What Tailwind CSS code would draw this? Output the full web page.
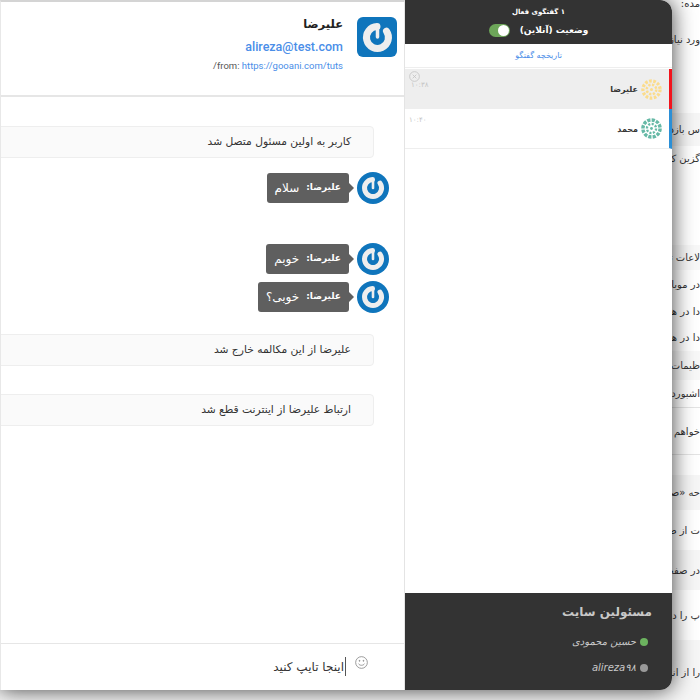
<!DOCTYPE html>
<html lang="fa" dir="rtl">
<head>
    <meta charset="UTF-8">
    <meta name="viewport" content="width=device-width, initial-scale=1.0">
    <title>Live chat</title>
    <script src="https://cdn.jsdelivr.net/npm/@tailwindcss/browser@4"></script>
</head>
<body class="m-0 bg-white font-['DejaVu_Sans',sans-serif]">
    <div class="relative w-[700px] h-[700px] overflow-hidden bg-white">
        <!-- Page behind the chat window -->
        <div class="flex flex-col text-[10px] text-[#333] whitespace-nowrap">
            <div class="h-[24px] leading-[8px]">مده:</div>
            <div class="h-[89px] pt-[8px]">ورد نیاز</div>
            <div class="h-[33px] flex items-center bg-[#f6f6f6]">س بازدید</div>
            <div class="h-[99px] pt-[5px]">گزین کنید</div>
            <div class="h-[25px] flex items-center bg-[#f8f8f8]">لاعات تماس</div>
            <div class="h-[28px] flex items-center">در موبایل</div>
            <div class="h-[26px] flex items-center">دا در هنگام</div>
            <div class="h-[27px] flex items-center">دا در هنگام</div>
            <div class="h-[29px] flex items-center bg-[#f8f8f8]">ظیمات کلی</div>
            <div class="h-[27px] flex items-center">اشبورد شما</div>
            <div class="h-[48px] flex items-center border-y border-[#e4e4e4]">خواهم آمد</div>
            <div class="h-[20px]"></div>
            <div class="h-[35px] flex items-center bg-[#f6f6f6]">حه «صفحه</div>
            <div class="h-[40px] flex items-center">ت از صفحه</div>
            <div class="h-[40px] flex items-center bg-[#f6f6f6]">در صفحه</div>
            <div class="h-[50px] flex items-center">پ را در</div>
            <div class="h-[65px] flex items-center bg-[#f6f6f6]">را از انواع</div>
        </div>

        <!-- Chat window -->
        <div dir="ltr" class="absolute left-0 top-0 w-[672px] h-[690px] flex rounded-r-[12px] shadow-[0_0_22px_rgba(0,0,0,0.75)]">
            <section dir="rtl" class="w-[405px] h-full flex flex-col bg-white border-t-2 border-[#d4d4d4] border-l border-l-[#e8e8e8] border-r border-r-[#e4e4e4] overflow-hidden">
                <header class="h-[95px] shrink-0 flex items-start gap-[14px] pr-[7px] pt-[15px] border-b-2 border-[#e6e6e6]">
                    <svg class="w-[40px] h-[40px] shrink-0" viewBox="0 0 40 40">
                        <rect width="40" height="40" rx="6" fill="#0f75bc"/>
                        <path d="M29.5 14.2A11 11 0 1 1 20 9.5" fill="none" stroke="#eeeeee" stroke-width="7" stroke-linecap="round"/>
                        <path d="M20.5 10V20" stroke="#eeeeee" stroke-width="3.5" stroke-linecap="round"/>
                    </svg>
                    <div class="-mt-[2px] flex flex-col items-start">
                        <h2 class="text-[11.5px] leading-[18px] font-bold text-[#222] m-0">علیرضا</h2>
                        <a class="mt-[6px] text-[12.5px] leading-[16px] font-medium font-['Roboto',sans-serif] text-[#4a8ee8]">alireza@test.com</a>
                        <p dir="ltr" class="mt-[4px] text-[9.5px] leading-[14px] font-['Roboto',sans-serif] text-[#555]">/from: <span class="text-[#4a8ee8]">https://gooani.com/tuts</span></p>
                    </div>
                </header>

                <div class="flex-1 flex flex-col items-start pr-[30px] pt-[29px]">
                    <div class="w-[400px] h-[32px] shrink-0 flex items-center pr-[22px] rounded-[4px] border border-[#eeeeee] bg-[#fafafa] text-[10.7px] text-[#333]">کاربر به اولین مسئول متصل شد</div>

                    <div class="mt-[14px] flex items-center gap-[8px] -mr-[15px]">
                        <svg class="w-[32px] h-[32px] shrink-0" viewBox="0 0 32 32">
                            <circle cx="16" cy="16" r="16" fill="#0f75bc"/>
                            <path d="M23 11.1A8.5 8.5 0 1 1 15.5 7.5" fill="none" stroke="#eeeeee" stroke-width="5" stroke-linecap="round"/>
                            <path d="M16 8V16" stroke="#eeeeee" stroke-width="2.6" stroke-linecap="round"/>
                        </svg>
                        <div class="relative h-[30px] px-[8px] flex items-center gap-[7px] rounded-[3px] bg-[#5f5f5f] text-[12px] text-white">
                            <span class="absolute -right-[5px] top-[10px] w-0 h-0 border-y-[5px] border-y-transparent border-l-[5px] border-l-[#5f5f5f]"></span>
                            <b class="text-[9px]">علیرضا:</b><span>سلام</span>
                        </div>
                    </div>

                    <div class="mt-[39px] flex items-center gap-[8px] -mr-[15px]">
                        <svg class="w-[32px] h-[32px] shrink-0" viewBox="0 0 32 32">
                            <circle cx="16" cy="16" r="16" fill="#0f75bc"/>
                            <path d="M23 11.1A8.5 8.5 0 1 1 15.5 7.5" fill="none" stroke="#eeeeee" stroke-width="5" stroke-linecap="round"/>
                            <path d="M16 8V16" stroke="#eeeeee" stroke-width="2.6" stroke-linecap="round"/>
                        </svg>
                        <div class="relative h-[30px] px-[8px] flex items-center gap-[7px] rounded-[3px] bg-[#5f5f5f] text-[12px] text-white">
                            <span class="absolute -right-[5px] top-[10px] w-0 h-0 border-y-[5px] border-y-transparent border-l-[5px] border-l-[#5f5f5f]"></span>
                            <b class="text-[9px]">علیرضا:</b><span>خوبم</span>
                        </div>
                    </div>

                    <div class="mt-[6px] flex items-center gap-[8px] -mr-[15px]">
                        <svg class="w-[32px] h-[32px] shrink-0" viewBox="0 0 32 32">
                            <circle cx="16" cy="16" r="16" fill="#0f75bc"/>
                            <path d="M23 11.1A8.5 8.5 0 1 1 15.5 7.5" fill="none" stroke="#eeeeee" stroke-width="5" stroke-linecap="round"/>
                            <path d="M16 8V16" stroke="#eeeeee" stroke-width="2.6" stroke-linecap="round"/>
                        </svg>
                        <div class="relative h-[30px] px-[8px] flex items-center gap-[7px] rounded-[3px] bg-[#5f5f5f] text-[12px] text-white">
                            <span class="absolute -right-[5px] top-[10px] w-0 h-0 border-y-[5px] border-y-transparent border-l-[5px] border-l-[#5f5f5f]"></span>
                            <b class="text-[9px]">علیرضا:</b><span>خوبی؟</span>
                        </div>
                    </div>

                    <div class="mt-[21px] w-[400px] h-[32px] shrink-0 flex items-center pr-[22px] rounded-[4px] border border-[#eeeeee] bg-[#fafafa] text-[10.7px] text-[#333]">علیرضا از این مکالمه خارج شد</div>
                    <div class="mt-[28px] w-[400px] h-[32px] shrink-0 flex items-center pr-[22px] rounded-[4px] border border-[#eeeeee] bg-[#fafafa] text-[10.7px] text-[#333]">ارتباط علیرضا از اینترنت قطع شد</div>
                </div>

                <footer class="h-[47px] shrink-0 flex items-start pr-[36px] border-t border-[#e6e6e6] bg-white">
                    <svg class="mt-[12px] w-[13px] h-[13px] shrink-0" viewBox="0 0 14 14" fill="none" stroke="#888" stroke-width="0.9">
                        <circle cx="7" cy="7" r="6.3"/>
                        <path d="M3.8 8.2C4.8 10.6 9.2 10.6 10.2 8.2"/>
                        <circle cx="4.9" cy="5.2" r="0.5" fill="#888"/>
                        <circle cx="9.1" cy="5.2" r="0.5" fill="#888"/>
                    </svg>
                    <div class="mt-[13px] mr-[9px] h-[19px] border-r border-[#555] pr-[1px] text-[12px] leading-[20px] text-[#333]">اینجا تایپ کنید</div>
                </footer>
            </section>

            <aside dir="rtl" class="w-[267px] h-full flex flex-col bg-white rounded-r-[12px] overflow-hidden">
                <div class="h-[44px] shrink-0 flex flex-col items-center pt-[6px] bg-[#333333] text-white">
                    <div class="text-[7px] leading-[12px] font-bold">۱ گفتگوی فعال</div>
                    <div class="mt-[5px] flex items-center gap-[10px]">
                        <span class="text-[9px] leading-[14px] font-bold">وضعیت (آنلاین)</span>
                        <span dir="ltr" class="w-[21px] h-[13px] flex justify-end items-center pr-[1px] rounded-full bg-[#6da659]"><span class="w-[11px] h-[11px] rounded-full bg-white"></span></span>
                    </div>
                </div>
                <div class="h-[24px] shrink-0 flex items-center justify-center border-b border-[#eeeeee] text-[8px] text-[#4a8ee8]">تاریخچه گفتگو</div>

                <div class="mt-[1px] h-[40px] shrink-0 flex items-center gap-[3px] border-r-[3px] border-[#f2141c] bg-[#eeeeee] pr-[7px]">
                    <svg class="w-[21px] h-[21px] shrink-0" viewBox="0 0 22 22" fill="none" stroke="#fbdc8c">
                        <circle cx="11" cy="11" r="9" stroke-width="3.4" stroke-dasharray="2.8 1.6"/>
                        <circle cx="11" cy="11" r="5" stroke-width="2.6" stroke-dasharray="2.4 1.5"/>
                        <circle cx="11" cy="11" r="1.6" fill="#fbdc8c" stroke="none"/>
                    </svg>
                    <span class="mt-[2px] text-[8px] font-bold text-[#333]">علیرضا</span>
                    <div class="relative mr-auto ml-[4px] w-[18px] h-[24px] self-start">
                        <svg class="absolute left-0 top-[2px] w-[11px] h-[11px]" viewBox="0 0 12 12" fill="none" stroke="#c4c4c4" stroke-width="0.9">
                            <circle cx="6" cy="6" r="5.3"/>
                            <path d="M4 4L8 8M8 4L4 8"/>
                        </svg>
                        <span class="absolute left-[2px] top-[12px] text-[7px] leading-[8px] text-[#c4c4c4]">۱۰:۳۸</span>
                    </div>
                </div>
                <div class="h-[40px] shrink-0 flex items-center gap-[3px] border-r-[3px] border-[#2b8fd6] border-b border-b-[#eeeeee] bg-white pr-[7px]">
                    <svg class="w-[21px] h-[21px] shrink-0" viewBox="0 0 22 22" fill="none" stroke="#66b9a6">
                        <circle cx="11" cy="11" r="9" stroke-width="3.6" stroke-dasharray="3.4 1.3"/>
                        <circle cx="11" cy="11" r="4.8" stroke-width="2.4" stroke-dasharray="2.2 1.5"/>
                        <circle cx="11" cy="11" r="1.5" fill="#66b9a6" stroke="none"/>
                    </svg>
                    <span class="mt-[2px] text-[8px] font-bold text-[#333]">محمد</span>
                    <span class="mr-auto ml-[4px] self-start mt-[7px] text-[7px] leading-[8px] text-[#c4c4c4]">۱۰:۴۰</span>
                </div>

                <div class="flex-1"></div>

                <div class="h-[97px] shrink-0 pr-[20px] pt-[9px] bg-[#333333] text-[#c8c8c8]">
                    <h3 class="text-[12px] leading-[20px] font-bold m-0">مسئولین سایت</h3>
                    <div class="mt-[13px] pr-[4px] flex items-center gap-[4px] text-[10px] leading-[14px] italic"><span class="w-[8px] h-[8px] rounded-full bg-[#6cb35f]"></span>حسین محمودی</div>
                    <div class="mt-[12px] pr-[4px] flex items-center gap-[4px] text-[10px] leading-[14px] italic"><span class="w-[8px] h-[8px] rounded-full bg-[#999999]"></span>alireza۹۸</div>
                </div>
            </aside>
        </div>
    </div>
</body>
</html>
